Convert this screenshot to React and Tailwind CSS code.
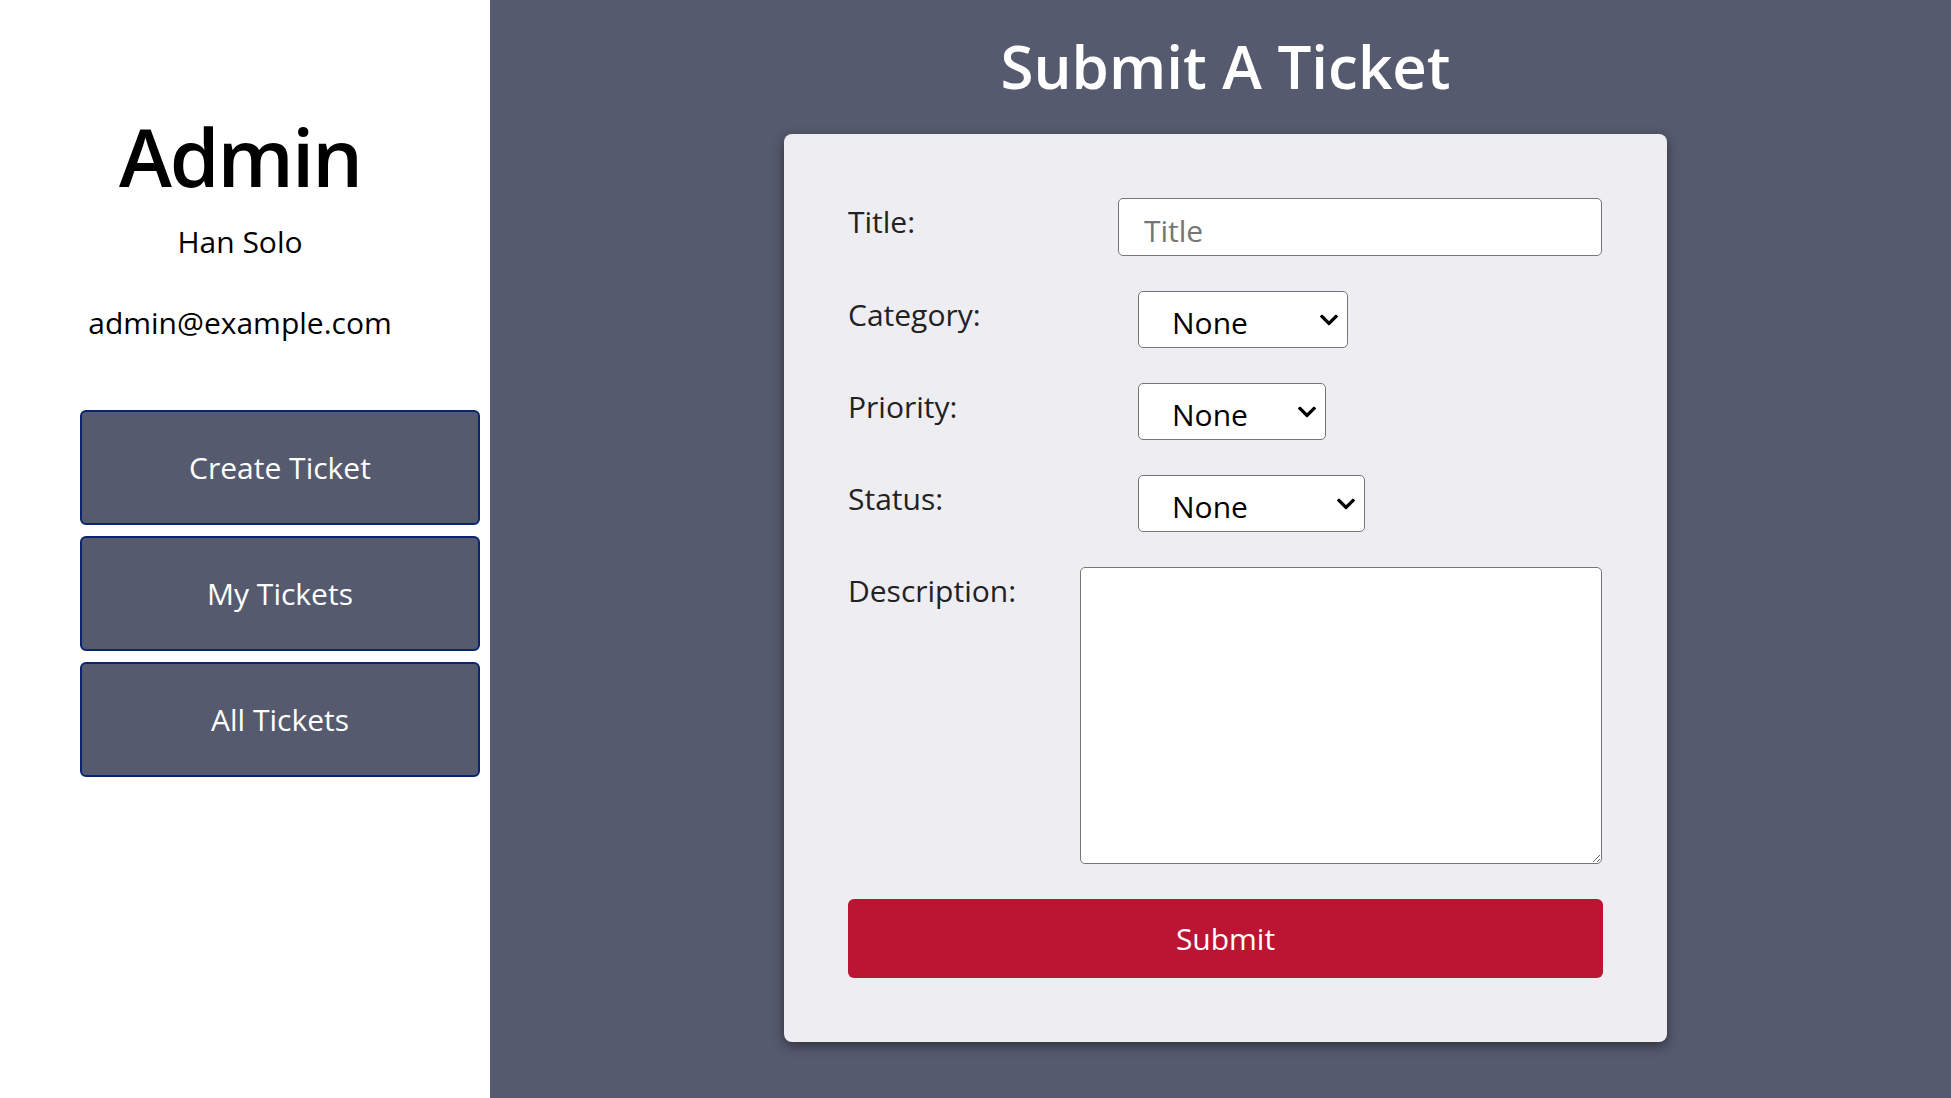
import { useState } from 'react'

const navItems = ['Create Ticket', 'My Tickets', 'All Tickets']

const selects = [
  { label: 'Category:', name: 'category', width: 'w-[210px]' },
  { label: 'Priority:', name: 'priority', width: 'w-[188px]' },
  { label: 'Status:', name: 'status', width: 'w-[227px]' },
]

function Chevron() {
  return (
    <svg
      className="pointer-events-none absolute right-[10px] top-1/2 -translate-y-1/2"
      width="18"
      height="11"
      viewBox="0 0 18 11"
      fill="none"
    >
      <path d="M2 2l7 7 7-7" stroke="#000" strokeWidth="3.2" strokeLinecap="square" />
    </svg>
  )
}

function Sidebar() {
  return (
    <aside className="w-[490px] shrink-0 bg-white">
      <div className="w-[480px] pt-[116px] text-center text-black">
        <h1 className="text-[80px] font-semibold leading-[80px] tracking-tight">Admin</h1>
        <p className="mt-[26px] text-[30px] leading-[40px]">Han Solo</p>
        <p className="mt-[41px] text-[30px] leading-[40px]">admin@example.com</p>
      </div>
      <nav className="ml-[80px] mt-[67px] flex w-[400px] flex-col gap-[11px]">
        {navItems.map((item) => (
          <button
            key={item}
            className="h-[115px] rounded-md border-2 border-[#0a2470] bg-[#565a6e] text-[30px] text-white"
            type="button"
          >
            {item}
          </button>
        ))}
      </nav>
    </aside>
  )
}

function TicketForm() {
  const [form, setForm] = useState({ title: '', category: '', priority: '', status: '', description: '' })

  function update(event) {
    setForm({ ...form, [event.target.name]: event.target.value })
  }

  return (
    <form
      className="flex w-[883px] flex-col gap-[35px] rounded-lg bg-[#eeedf2] p-[64px] shadow-[0_4px_12px_rgba(0,0,0,0.45)]"
      onSubmit={(event) => event.preventDefault()}
    >
      <div className="flex items-start">
        <label className="w-[270px] pt-[1px] text-[30px] leading-[45px] text-[#222]">Title:</label>
        <input
          className="h-[58px] w-[484px] rounded-[5px] border border-[#767676] bg-white px-[25px] pt-[6px] text-[30px] text-black outline-none placeholder:text-[#757575]"
          name="title"
          placeholder="Title"
          value={form.title}
          onChange={update}
        />
      </div>
      {selects.map((field) => (
        <div key={field.name} className="flex items-start">
          <label className="w-[290px] pt-[1px] text-[30px] leading-[45px] text-[#222]">{field.label}</label>
          <div className={`relative h-[57px] ${field.width}`}>
            <select
              className="h-full w-full appearance-none rounded-[5px] border border-[#767676] bg-white pl-[33px] pt-[6px] text-[30px] text-black outline-none"
              name={field.name}
              value={form[field.name]}
              onChange={update}
            >
              <option value="">None</option>
            </select>
            <Chevron />
          </div>
        </div>
      ))}
      <div className="flex items-start">
        <label className="w-[232px] pt-[1px] text-[30px] leading-[45px] text-[#222]">Description:</label>
        <textarea
          className="h-[297px] w-[522px] rounded-[5px] border border-[#767676] bg-white p-2 text-[24px] outline-none"
          name="description"
          value={form.description}
          onChange={update}
        />
      </div>
      <button className="h-[79px] w-full rounded-md bg-[#bb1533] text-[30px] text-white" type="submit">
        Submit
      </button>
    </form>
  )
}

export default function App() {
  return (
    <div className="flex h-[1098px] w-full overflow-hidden font-['Open_Sans',sans-serif]">
      <Sidebar />
      <main className="flex flex-1 flex-col items-center bg-[#565a6e] pl-[10px] pt-[25px]">
        <h2 className="mb-[27px] text-[60px] font-semibold leading-[82px] text-white">Submit A Ticket</h2>
        <TicketForm />
      </main>
    </div>
  )
}
